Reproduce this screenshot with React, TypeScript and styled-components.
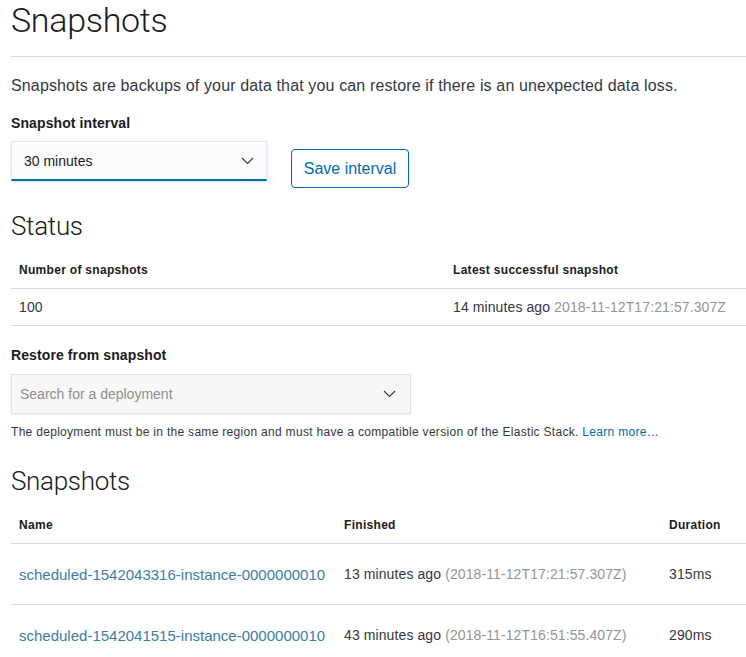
import React from "react";
import styled, { createGlobalStyle } from "styled-components";

const Global = createGlobalStyle`
  html, body { margin: 0; padding: 0; background: #fff; }
  body {
    font-family: "Liberation Sans", Arial, sans-serif;
    color: #343741;
    -webkit-font-smoothing: antialiased;
  }
  * { box-sizing: border-box; }
`;

const Page = styled.div`
  padding: 0 0 0 11px;
  width: 746px;
`;

const Title = styled.h1<{ $size: number; $mt?: number }>`
  margin: ${(p) => p.$mt ?? 0}px 0 0;
  font-family: Roboto, "Liberation Sans", sans-serif;
  font-weight: 300;
  font-size: ${(p) => p.$size}px;
  line-height: ${(p) => Math.round(p.$size * 1.2)}px;
  color: #1a1c21;
  letter-spacing: -0.3px;
`;

const Rule = styled.hr`
  border: 0;
  border-top: 1px solid #d3dae6;
  margin: 15px 0 0;
`;

const Lead = styled.p`
  margin: 17px 0 0;
  font-size: 16px;
  line-height: 24px;
  letter-spacing: 0.14px;
`;

const Label = styled.div<{ $mt: number }>`
  margin-top: ${(p) => p.$mt}px;
  font-size: 14px;
  font-weight: 700;
  line-height: 18px;
  color: #1a1c21;
  letter-spacing: 0.1px;
`;

const FormRow = styled.div`
  display: flex;
  align-items: flex-start;
  gap: 24px;
  margin-top: 9px;
`;

const SelectBox = styled.div`
  width: 256px;
  height: 40px;
  display: flex;
  align-items: center;
  justify-content: space-between;
  padding: 0 12px;
  background: #fbfcfd;
  border: 1px solid #e3e7ee;
  border-bottom: 2px solid #006bb4;
  box-shadow: 0 1px 2px rgba(0, 0, 0, 0.12);
  font-size: 14px;
  color: #1a1c21;
`;

const Button = styled.button`
  margin-top: 8px;
  height: 39px;
  width: 118px;
  border: 1px solid #006bb4;
  border-radius: 4px;
  background: #fff;
  color: #006bb4;
  font-family: "Liberation Sans", Arial, sans-serif;
  font-size: 16px;
  padding: 0;
`;

const Chevron = () => (
  <svg width="13" height="8" viewBox="0 0 13 8">
    <path d="M1 1 L6.5 6.5 L12 1" fill="none" stroke="#343741" strokeWidth="1.1" />
  </svg>
);

const TableGrid = styled.div<{ $cols: string; $mt: number }>`
  display: grid;
  grid-template-columns: ${(p) => p.$cols};
  margin-top: ${(p) => p.$mt}px;
  width: 735px;
`;

const HeadCell = styled.div<{ $h: number }>`
  height: ${(p) => p.$h}px;
  display: flex;
  align-items: flex-end;
  padding: 0 8px 11px;
  font-size: 12px;
  font-weight: 700;
  letter-spacing: 0.3px;
  color: #1a1c21;
  border-bottom: 1px solid #d3dae6;
`;

const Cell = styled.div<{ $h: number }>`
  height: ${(p) => p.$h}px;
  display: flex;
  align-items: center;
  padding: 0 8px;
  font-size: 14px;
  letter-spacing: 0.1px;
  border-bottom: 1px solid #d3dae6;
  white-space: nowrap;
`;

const Muted = styled.span`
  color: #959595;
  margin-left: 4px;
`;

const TableLink = styled.a`
  color: #3b7da8;
  text-decoration: none;
  font-size: 15px;
  letter-spacing: 0;
`;

const Combo = styled.div`
  margin-top: 10px;
  width: 400px;
  height: 40px;
  display: flex;
  align-items: center;
  justify-content: space-between;
  padding: 0 14px 0 8px;
  background: #f8f8f8;
  border: 1px solid #e1e1e1;
  box-shadow: 0 1px 2px rgba(0, 0, 0, 0.06);
  font-size: 14px;
  color: #8f8f8f;
`;

const Help = styled.div`
  margin-top: 11px;
  font-size: 12px;
  line-height: 14px;
  letter-spacing: 0.3px;
  color: #343741;
`;

const HelpLink = styled.a`
  color: #006bb4;
  text-decoration: none;
`;

const snapshots = [
  { name: "scheduled-1542043316-instance-0000000010", ago: "13 minutes ago", ts: "(2018-11-12T17:21:57.307Z)", dur: "315ms" },
  { name: "scheduled-1542041515-instance-0000000010", ago: "43 minutes ago", ts: "(2018-11-12T16:51:55.407Z)", dur: "290ms" },
];

export default function App() {
  return (
    <Page>
      <Global />
      <Title $size={34}>Snapshots</Title>
      <Rule />
      <Lead>Snapshots are backups of your data that you can restore if there is an unexpected data loss.</Lead>
      <Label $mt={16}>Snapshot interval</Label>
      <FormRow>
        <SelectBox>
          <span>30 minutes</span>
          <Chevron />
        </SelectBox>
        <Button>Save interval</Button>
      </FormRow>
      <Title $size={26} $mt={23}>Status</Title>
      <TableGrid $cols="434px 1fr" $mt={8}>
        <HeadCell $h={39}>Number of snapshots</HeadCell>
        <HeadCell $h={39}>Latest successful snapshot</HeadCell>
        <Cell $h={37}>100</Cell>
        <Cell $h={37}>
          14 minutes ago<Muted>2018-11-12T17:21:57.307Z</Muted>
        </Cell>
      </TableGrid>
      <Label $mt={20}>Restore from snapshot</Label>
      <Combo>
        <span>Search for a deployment</span>
        <Chevron />
      </Combo>
      <Help>
        The deployment must be in the same region and must have a compatible version of the Elastic Stack.{" "}
        <HelpLink href="#">Learn more…</HelpLink>
      </Help>
      <Title $size={26} $mt={27}>Snapshots</Title>
      <TableGrid $cols="325px 325px 1fr" $mt={8}>
        <HeadCell $h={39}>Name</HeadCell>
        <HeadCell $h={39}>Finished</HeadCell>
        <HeadCell $h={39}>Duration</HeadCell>
        {snapshots.map((s) => (
          <React.Fragment key={s.name}>
            <Cell $h={61}>
              <TableLink href="#">{s.name}</TableLink>
            </Cell>
            <Cell $h={61}>
              {s.ago}
              <Muted>{s.ts}</Muted>
            </Cell>
            <Cell $h={61}>{s.dur}</Cell>
          </React.Fragment>
        ))}
      </TableGrid>
    </Page>
  );
}
